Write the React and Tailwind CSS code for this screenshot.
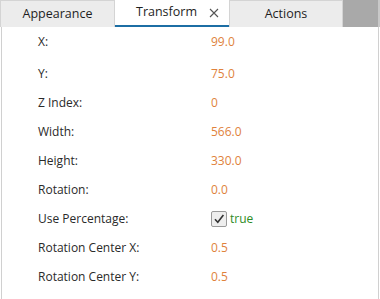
import React from 'react';

const rows = [
  { label: 'X:', value: '99.0' },
  { label: 'Y:', value: '75.0' },
  { label: 'Z Index:', value: '0' },
  { label: 'Width:', value: '566.0' },
  { label: 'Height:', value: '330.0' },
  { label: 'Rotation:', value: '0.0' },
  { label: 'Use Percentage:', check: true },
  { label: 'Rotation Center X:', value: '0.5' },
  { label: 'Rotation Center Y:', value: '0.5' },
];

export default function App() {
  return (
    <div className="w-[380px] h-[299px] bg-white overflow-hidden flex flex-col" style={{ fontFamily: '"Open Sans", "Noto Sans", sans-serif' }}>
      {/* Tabs */}
      <div className="flex h-[27px] shrink-0">
        <div className="w-[115px] bg-[#ececec] border border-[#d4d4d4] border-b-0 flex items-center justify-center text-[12.5px] text-[#1e1e1e]">
          Appearance
        </div>
        <div className="w-[114px] bg-white border-b-2 border-[#1c6ea4] flex items-center text-[12.5px] text-[#1e1e1e]">
          <span className="ml-[21px]">Transform</span>
          <svg className="ml-auto mr-[10px]" width="10" height="10" viewBox="0 0 10 10">
            <path d="M1 1 L9 9 M9 1 L1 9" stroke="#555" strokeWidth="1.1" fill="none" />
          </svg>
        </div>
        <div className="w-[114px] bg-[#ececec] border border-[#d4d4d4] border-b-0 flex items-center justify-center text-[12.5px] text-[#1e1e1e]">
          Actions
        </div>
        <div className="flex-1 bg-[#a9a9a9] border-r-2 border-[#c8c8c8]"></div>
      </div>

      {/* Content */}
      <div className="flex-1 border-l border-r border-[#d0d0d0] mx-[1px]">
        {rows.map((r, i) => (
          <div key={r.label} className={i === 0 ? 'flex items-center h-[32px] pb-[3px] text-[12px]' : 'flex items-center h-[29px] text-[12px]'}>
            <div className="w-[209px] pl-[36px] text-[#2a2a2a]">{r.label}</div>
            {r.check ? (
              <div className="flex items-center">
                <span className="w-[16px] h-[16px] border border-[#9a9a9a] rounded-[2px] bg-[#eeeeee] flex items-center justify-center">
                  <svg width="12" height="12" viewBox="0 0 12 12">
                    <path d="M2 6.2 L4.8 9.2 L10.4 2" fill="none" stroke="#333" strokeWidth="1.6" />
                  </svg>
                </span>
                <span className="ml-[3px] text-[#2e8b1f]">true</span>
              </div>
            ) : (
              <div className="text-[#e0823c]">{r.value}</div>
            )}
          </div>
        ))}
      </div>
    </div>
  );
}
